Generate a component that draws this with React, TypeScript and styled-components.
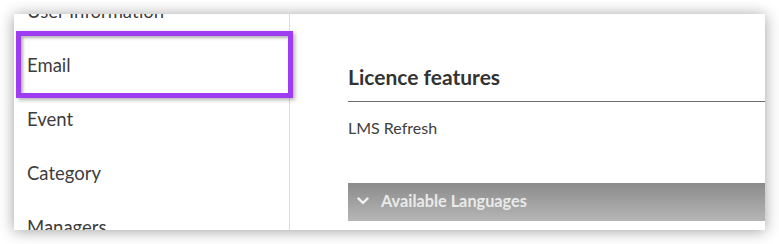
import React from "react";
import styled, { createGlobalStyle } from "styled-components";

const GlobalStyle = createGlobalStyle`
  html, body {
    margin: 0;
    padding: 0;
    background: #ffffff;
    font-family: Lato, "Open Sans", "Liberation Sans", sans-serif;
  }
  * { box-sizing: border-box; }
`;

const Stage = styled.div`
  position: relative;
  width: 779px;
  height: 244px;
  padding: 14px;
  overflow: hidden;
`;

const Card = styled.div`
  display: flex;
  width: 751px;
  height: 216px;
  background: #ffffff;
  overflow: hidden;
  box-shadow: 0 1px 14px rgba(0, 0, 0, 0.38);
`;

const Sidebar = styled.nav`
  flex: 0 0 276px;
  border-right: 1px solid #dcdcdc;
  overflow: hidden;
`;

const NavList = styled.ul<{ $scroll: number }>`
  list-style: none;
  margin: ${(p) => -p.$scroll}px 0 0 0;
  padding: 0;
`;

const NavItem = styled.li`
  height: 54px;
  line-height: 54px;
  padding-left: 13px;
  font-size: 18.5px;
  color: #3d3d3d;
  white-space: nowrap;
`;

const Main = styled.main`
  flex: 1;
  padding: 51px 0 0 58px;
  overflow: hidden;
`;

const Heading = styled.h2`
  margin: 0;
  font-size: 21px;
  line-height: 24px;
  font-weight: 700;
  color: #333333;
  padding-bottom: 12px;
  border-bottom: 1px solid #6a6a6a;
`;

const Feature = styled.p`
  margin: 16px 0 0 0;
  font-size: 16px;
  line-height: 20px;
  color: #404040;
`;

const AccordionBar = styled.div`
  margin-top: 45px;
  height: 38px;
  display: flex;
  align-items: center;
  gap: 12px;
  padding: 0 0 2px 9px;
  background: linear-gradient(to bottom, #8b8b8b, #b6b6b6);
`;

const AccordionTitle = styled.span`
  font-size: 16.3px;
  line-height: 20px;
  font-weight: 700;
  color: #eaeaea;
`;

const Highlight = styled.div`
  position: absolute;
  left: 16px;
  top: 31px;
  width: 277px;
  height: 67px;
  border: 5px solid #9d3cf1;
  box-shadow: 2px 2px 4px rgba(0, 0, 0, 0.3), inset 2px 2px 3px rgba(0, 0, 0, 0.3);
  pointer-events: none;
`;

const Chevron = () => (
  <svg width="12" height="8" viewBox="0 0 12 8" aria-hidden="true">
    <path d="M1.5 1.5 L6 6 L10.5 1.5" fill="none" stroke="#f4f4f4" strokeWidth="2.4" strokeLinecap="round" strokeLinejoin="round" />
  </svg>
);

const navItems = ["User Information", "Email", "Event", "Category", "Managers"];

export default function App() {
  return (
    <>
      <GlobalStyle />
      <Stage>
        <Card>
          <Sidebar>
            <NavList $scroll={30}>
              {navItems.map((item) => (
                <NavItem key={item}>{item}</NavItem>
              ))}
            </NavList>
          </Sidebar>
          <Main>
            <Heading>Licence features</Heading>
            <Feature>LMS Refresh</Feature>
            <AccordionBar>
              <Chevron />
              <AccordionTitle>Available Languages</AccordionTitle>
            </AccordionBar>
          </Main>
        </Card>
        <Highlight />
      </Stage>
    </>
  );
}
